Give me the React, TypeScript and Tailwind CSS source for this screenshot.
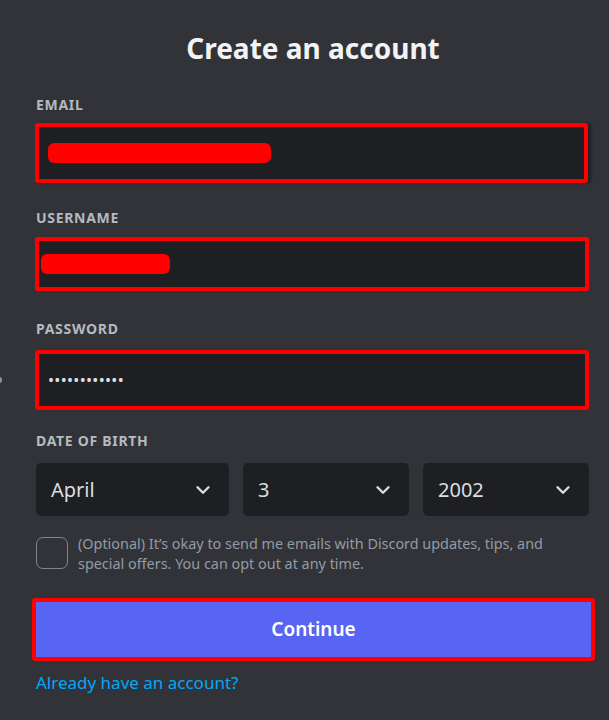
import { ChevronDown } from "lucide-react";

function Label({ children }: { children: string }) {
  return (
    <div className="text-[14px] leading-[16px] font-bold tracking-[0.05em] text-[#b5bac1] uppercase">
      {children}
    </div>
  );
}

function Select({ value }: { value: string }) {
  return (
    <div className="h-[53px] rounded-[5px] bg-[#1e1f22] flex items-center justify-between pl-[15px] pr-[15px]">
      <span className="text-[20px] text-[#dbdee1]">{value}</span>
      <ChevronDown size={22} strokeWidth={2.6} className="text-[#dbdee1]" />
    </div>
  );
}

export default function App() {
  return (
    <div
      className="relative w-[609px] h-[720px] bg-[#313338] overflow-hidden px-[36px] pt-[31px]"
      style={{ fontFamily: '"Noto Sans", "Open Sans", sans-serif' }}
    >
      {/* stray bit of the page behind */}
      <div className="absolute left-[-3px] top-[377px] w-[5px] h-[6px] rounded-full bg-[#8e9297]" />

      <h1 className="text-center pl-[17px] text-[28px] leading-[34px] font-bold text-[#f2f3f5]">
        Create an account
      </h1>

      <div className="mt-[32px]">
        <Label>Email</Label>
        <div className="mt-[10px] -ml-[1px] w-[553px] h-[60px] border-4 border-[#ff0000] rounded-[3px] bg-[#1e1f22] flex items-center pl-[9px] shadow-[3px_0_3px_rgba(0,0,0,0.35)]">
          <div className="w-[223px] h-[20px] rounded-[6px] bg-[#ff0000]" />
        </div>
      </div>

      <div className="mt-[27px]">
        <Label>Username</Label>
        <div className="mt-[11px] -ml-[1px] w-[554px] h-[54px] border-4 border-[#ff0000] rounded-[3px] bg-[#1e1f22] flex items-center pl-[2px]">
          <div className="w-[129px] h-[20px] rounded-[6px] bg-[#ff0000]" />
        </div>
      </div>

      <div className="mt-[30px]">
        <Label>Password</Label>
        <div className="mt-[13px] -ml-[1px] w-[554px] h-[60px] border-4 border-[#ff0000] rounded-[3px] bg-[#1e1f22] flex items-center pl-[9px]">
          <span className="text-[16px] tracking-[0.02em] text-[#dbdee1]">••••••••••••</span>
        </div>
      </div>

      <div className="mt-[23px]">
        <Label>Date of birth</Label>
        <div className="mt-[14px] grid grid-cols-[193px_166px_166px] gap-[14px]">
          <Select value="April" />
          <Select value="3" />
          <Select value="2002" />
        </div>
      </div>

      <div className="mt-[21px] flex gap-[10px]">
        <div className="w-[32px] h-[32px] shrink-0 rounded-[7px] border border-[#80848e]" />
        <p className="text-[14.4px] leading-[20px] text-[#949ba4] w-[480px] -mt-[3px]">
          (Optional) It’s okay to send me emails with Discord updates, tips, and special offers.
          You can opt out at any time.
        </p>
      </div>

      <button className="mt-[24px] -ml-[4px] w-[563px] h-[63px] border-4 border-[#ff0000] rounded-[3px] bg-[#5865f2] text-white text-[19px] font-semibold flex items-center justify-center">
        Continue
      </button>

      <a href="#" className="block mt-[10px] text-[17px] leading-[24px] text-[#00a8fc]">
        Already have an account?
      </a>
    </div>
  );
}
